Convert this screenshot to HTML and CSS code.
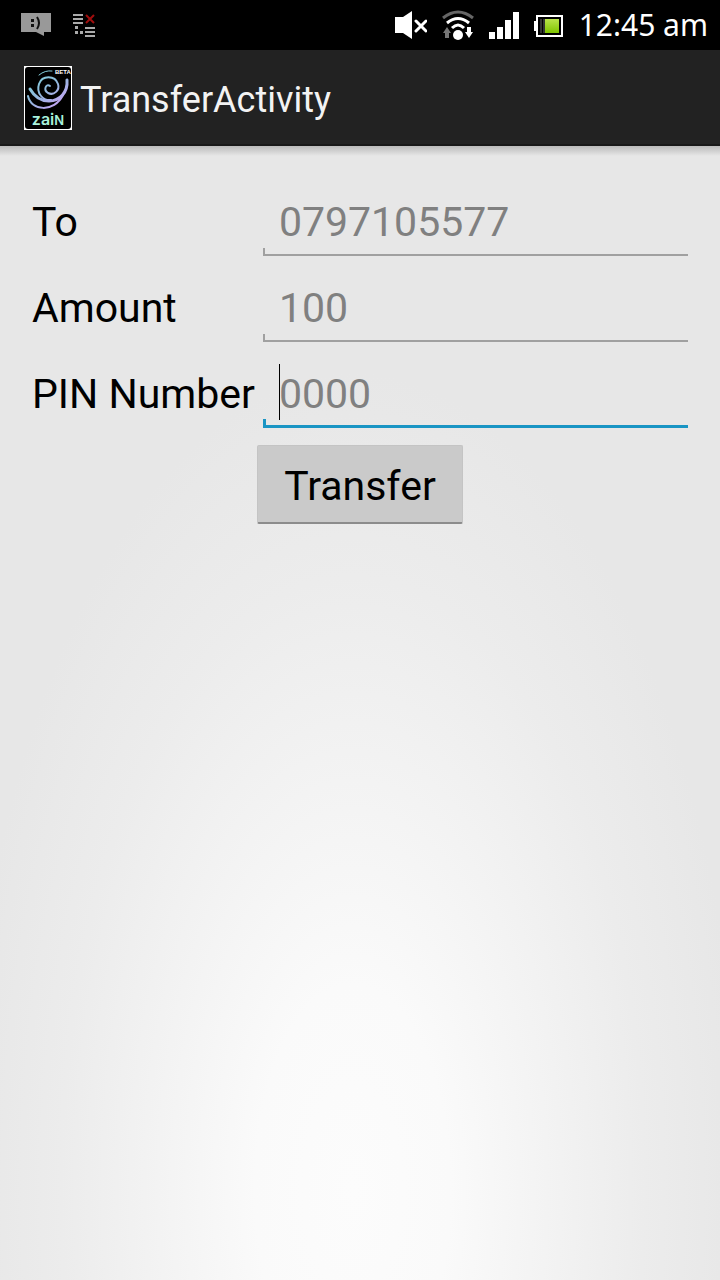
FILE: index.html
```html
<!DOCTYPE html>
<html lang="en">

<head>
    <meta charset="UTF-8">
    <meta name="viewport" content="width=device-width, initial-scale=1">
    <title>TransferActivity</title>
    <link rel="stylesheet" href="styles.css">
</head>

<body>
    <div class="statusBar">
        <svg width="30" height="24" viewBox="0 0 30 24">
            <path fill="#999" d="M0 0h30v19h-7v4l-8-4H0z" />
            <path fill="#111" d="M10 6h3v3h-3zM10 11h3v3h-3z" />
            <path fill="none" stroke="#111" stroke-width="2" d="M16 4q4 6 0 12" />
        </svg>
        <svg width="24" height="24" viewBox="0 0 24 24">
            <path fill="#aaa"
                d="M1 1h10v2H1zM1 5h10v2H1zM1 9h10v2H1zM3 13h3v3H3zM3 18h3v3H3zM8 18h3v3H8zM13 14h10v2H13zM13 18h10v2H13zM13 22h10v2H13z" />
            <path fill="none" stroke="#a00d0d" stroke-width="2" d="M14 2l8 8M22 2l-8 8" />
        </svg>
        <div class="statusRight">
            <svg width="32" height="30" viewBox="0 0 32 30">
                <path fill="#fff" d="M0 7h8l9-6v28l-9-6H0z" />
                <path fill="none" stroke="#fff" stroke-width="3" stroke-linecap="round" d="M21 11l10 10M31 11L21 21" />
            </svg>
            <svg width="32" height="30" viewBox="0 0 32 30">
                <g fill="none" stroke="#fff" stroke-width="3">
                    <path stroke="#666" d="M1 8Q16-4 31 8" />
                    <path d="M5 13Q16 4 27 13" />
                    <path d="M10 18Q16 12 22 18" />
                </g>
                <circle cx="16" cy="25" r="5" fill="#fff" />
                <path fill="#777" d="M5 17l4 6H7v5H3v-5H1z" />
                <path fill="#fff" d="M25 17h4v5h2l-4 6-4-6h2z" />
            </svg>
            <svg width="30" height="30" viewBox="0 0 30 30">
                <path fill="#fff" d="M0 22h6v7H0zM8 17h6v12H8zM16 10h6v19h-6zM24 2h6v27h-6z" />
            </svg>
            <svg width="30" height="30" viewBox="0 0 30 30">
                <defs>
                    <linearGradient id="charge" x2="0" y2="1">
                        <stop offset="0" stop-color="#b9e34a" />
                        <stop offset="1" stop-color="#7fc400" />
                    </linearGradient>
                </defs>
                <path fill="#fff" d="M0 11h3v10H0z" />
                <path fill="#000" stroke="#fff" stroke-width="2" d="M3 6h25v20H3z" />
                <path fill="#333" d="M6 9h2v14H6zM9 9h2v14H9z" />
                <path fill="url(#charge)" d="M11 9h14v14H11z" />
            </svg>
            <time class="clock">12:45 am</time>
        </div>
    </div>

    <header class="actionBar">
        <svg width="48" height="64" viewBox="0 0 48 64" role="img" aria-label="Zain">
            <defs>
                <linearGradient id="swirl" gradientUnits="userSpaceOnUse" x1="10" y1="6" x2="34" y2="40">
                    <stop offset="0" stop-color="#7fd8dc" />
                    <stop offset="0.5" stop-color="#8fb8dc" />
                    <stop offset="1" stop-color="#c4a4f4" />
                </linearGradient>
            </defs>
            <rect width="48" height="64" fill="#fff" />
            <rect x="1" y="1" width="46" height="62" rx="3" fill="#000" />
            <g fill="none" stroke="url(#swirl)" stroke-linecap="round">
                <path stroke-width="2" d="M26 20C22 17 19 24 24 27c6 3 12-3 10-9C31 9 18 9 15 18c-3 9 4 17 12 16" />
                <path stroke-width="3" d="M43 14c1 12-7 21-18 21C17 35 10 30 6 23" />
                <path stroke-width="2" d="M4 30c3 15 26 17 35-1" />
                <path stroke-width="1" d="M15 9q6-5 13-4" />
            </g>
            <text x="31" y="8" class="logoBeta">BETA</text>
            <text x="24" y="59" class="logoName">zai<tspan class="logoCap">N</tspan></text>
        </svg>
        <h1>TransferActivity</h1>
    </header>

    <main>
        <form class="transferForm">
            <label for="to">To</label>
            <input id="to" type="tel" placeholder="0797105577">

            <label for="amount">Amount</label>
            <input id="amount" type="text" inputmode="numeric" placeholder="100">

            <label for="pin">PIN Number</label>
            <div class="activeField">
                <input id="pin" type="password" inputmode="numeric" placeholder="0000">
            </div>

            <button type="submit">Transfer</button>
        </form>
    </main>
</body>

</html>
```
FILE: styles.css
```css
* {
    box-sizing: border-box;
}

body {
    margin: 0;
    min-height: 100vh;
    display: flex;
    flex-direction: column;
    font-family: Roboto, sans-serif;
    color: #000;
    background: #e8e8e8;
}

.statusBar {
    display: flex;
    align-items: center;
    height: 50px;
    padding: 0 12px 0 21px;
    gap: 21px;
    background: #000;
}

.statusRight {
    display: flex;
    align-items: center;
    gap: 15px;
    margin-left: auto;
}

.clock {
    font: 30px/50px "Noto Sans", sans-serif;
    color: #fff;
}

.actionBar {
    display: flex;
    align-items: center;
    gap: 8px;
    height: 96px;
    padding: 2px 24px 0;
    background: #222;
    border-bottom: 2px solid #181818;
}

.actionBar h1 {
    margin: 0;
    padding-top: 4px;
    font-size: 36px;
    font-weight: 400;
    color: #f3f3f3;
}

.logoBeta {
    font: bold 6px "Liberation Sans", sans-serif;
    fill: #fff;
}

.logoName {
    font: 600 16px Inter, sans-serif;
    fill: #a8f0dc;
    text-anchor: middle;
}

.logoCap {
    font-size: 13px;
}

main {
    flex: 1;
    padding: 32px;
    background:
        linear-gradient(#bbb, #e8e8e800 10px),
        radial-gradient(ellipse 54% 72% at 49% 92%, #fcfcfc, #fafafa 25%, #ececec 75%, #e7e7e7);
}

.transferForm {
    display: grid;
    grid-template-columns: auto 1fr;
    column-gap: 8px;
    row-gap: 8px;
    font-size: 41px;
    line-height: 56px;
}

.transferForm label {
    padding: 16px 0 6px;
}

.transferForm input {
    width: 100%;
    height: 78px;
    padding: 10px 16px 0;
    border: 0;
    font: inherit;
    outline: none;
    background:
        linear-gradient(#a0a0a0, #a0a0a0) 0 100% / 100% 2px no-repeat,
        linear-gradient(#a0a0a0, #a0a0a0) 0 100% / 2px 8px no-repeat;
}

.transferForm input::placeholder {
    color: #808080;
    opacity: 1;
}

.activeField {
    position: relative;
}

.activeField input {
    background:
        linear-gradient(#1a95c4, #1a95c4) 0 100% / 100% 3px no-repeat,
        linear-gradient(#1a95c4, #1a95c4) 0 100% / 3px 9px no-repeat;
}

/* text cursor */
.activeField::before {
    content: "";
    position: absolute;
    left: 16px;
    top: 14px;
    width: 1px;
    height: 56px;
    background: #000;
}

.transferForm button {
    grid-column: 1 / 3;
    justify-self: center;
    margin-top: 9px;
    padding: 12px 26px 8px;
    border: 1px solid #c4c4c4;
    border-bottom: 2px solid #8c8c8c;
    border-radius: 2px;
    font: inherit;
    color: #000;
    background: #cacaca;
}
```
